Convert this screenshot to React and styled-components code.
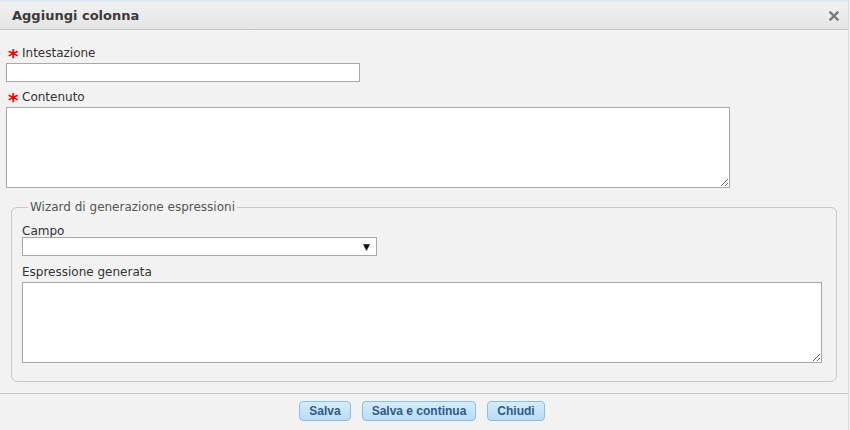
import React from 'react';
import styled, { createGlobalStyle } from 'styled-components';

const GlobalStyle = createGlobalStyle`
  html, body { margin: 0; padding: 0; }
  body {
    background: #f2f2f2;
    font-family: "DejaVu Sans", Verdana, sans-serif;
    font-size: 12px;
    color: #333;
  }
`;

const Dialog = styled.div`
  width: 849px;
  height: 430px;
  box-sizing: border-box;
  border-top: 2px solid #dfe8f1;
  border-right: 1px solid #d3dbe3;
  background: #f2f2f2;
  display: flex;
  flex-direction: column;
`;

const TitleBar = styled.div`
  height: 28px;
  box-sizing: border-box;
  display: flex;
  align-items: center;
  justify-content: space-between;
  padding: 0 9px 0 12px;
  background: linear-gradient(#f1f1f1, #e5e5e5);
  border-bottom: 1px solid #c9c9c9;
`;

const Title = styled.span`
  font-weight: bold;
  font-size: 13px;
  color: #3a3a3a;
`;

const CloseIcon = styled.svg`
  width: 10px;
  height: 10px;
  display: block;
`;

const Body = styled.div`
  flex: 1;
  padding: 16px 6px 0;
  display: flex;
  flex-direction: column;
`;

const Field = styled.div`
  display: flex;
  flex-direction: column;
  margin-bottom: ${p => p.$gap || 0}px;
`;

const Label = styled.label`
  line-height: 15px;
  margin-bottom: ${p => (p.$tight ? -2 : 2)}px;
  color: #333;
`;

const Star = styled.span`
  display: inline-block;
  width: 16px;
  padding-left: 2px;
  box-sizing: border-box;
  color: #e00;
  font-size: 20px;
  font-weight: bold;
  line-height: 0;
  vertical-align: -6px;
`;

const TextInput = styled.input`
  width: ${p => p.$w}px;
  height: 19px;
  box-sizing: border-box;
  margin: 0;
  border: 1px solid #a9a9a9;
  background: #fff;
`;

const TextArea = styled.textarea`
  width: ${p => p.$w}px;
  height: 81px;
  box-sizing: border-box;
  margin: 0;
  border: 1px solid #a9a9a9;
  background: #fff;
  resize: both;
`;

const Select = styled.div`
  width: 355px;
  height: 19px;
  box-sizing: border-box;
  border: 1px solid #a9a9a9;
  background: #fff;
  display: flex;
  align-items: center;
  justify-content: flex-end;
  padding-right: 6px;
  font-size: 9px;
  color: #111;
`;

const Fieldset = styled.fieldset`
  margin: 12px 6px 0 5px;
  padding: 10px 14px 18px 10px;
  border: 1px solid #c9c9c9;
  border-radius: 6px;
`;

const Legend = styled.legend`
  padding: 0 2px;
  margin-left: 6px;
  color: #555;
`;

const Footer = styled.div`
  height: 37px;
  box-sizing: border-box;
  border-top: 1px solid #c9c9c9;
  display: flex;
  justify-content: center;
  align-items: center;
  gap: 11px;
  padding: 0 4px 2px 0;
`;

const Button = styled.button`
  height: 20px;
  padding: 0 9px;
  font-family: "Liberation Sans", Arial, sans-serif;
  font-weight: bold;
  font-size: 12px;
  color: #2d5b87;
  background: linear-gradient(#d6ecfb, #b9dcf5);
  border: 1px solid #8fbde2;
  border-radius: 4px;
`;

export default function App() {
  return (
    <>
      <GlobalStyle />
      <Dialog>
        <TitleBar>
          <Title>Aggiungi colonna</Title>
          <CloseIcon viewBox="0 0 10 10">
            <path d="M1.5 1.5 L8.5 8.5 M8.5 1.5 L1.5 8.5" stroke="#7a7a7a" strokeWidth="2.4" strokeLinecap="square" />
          </CloseIcon>
        </TitleBar>
        <Body>
          <Field $gap={8}>
            <Label><Star>*</Star>Intestazione</Label>
            <TextInput $w={354} />
          </Field>
          <Field>
            <Label><Star>*</Star>Contenuto</Label>
            <TextArea $w={724} />
          </Field>
          <Fieldset>
            <Legend>Wizard di generazione espressioni</Legend>
            <Field $gap={9}>
              <Label $tight>Campo</Label>
              <Select>▼</Select>
            </Field>
            <Field>
              <Label>Espressione generata</Label>
              <TextArea $w={800} />
            </Field>
          </Fieldset>
        </Body>
        <Footer>
          <Button>Salva</Button>
          <Button>Salva e continua</Button>
          <Button>Chiudi</Button>
        </Footer>
      </Dialog>
    </>
  );
}
